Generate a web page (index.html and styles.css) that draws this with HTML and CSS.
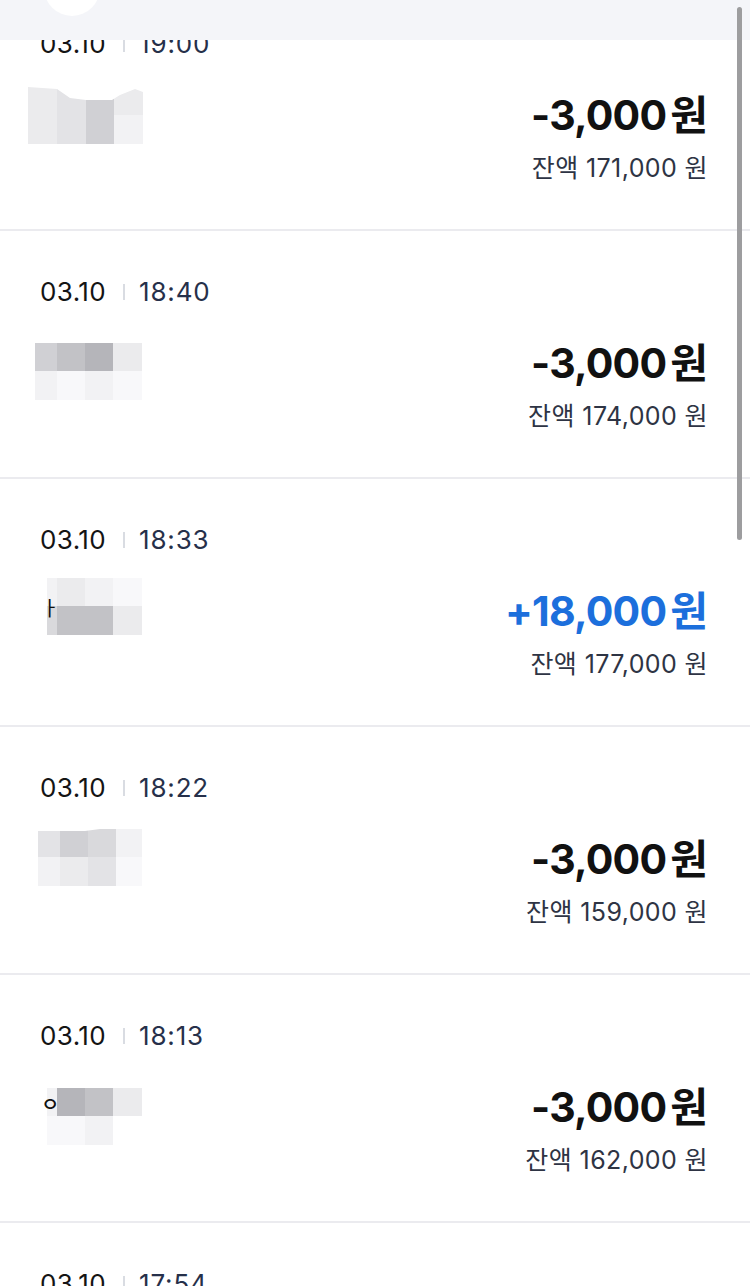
FILE: index.html
```html
<!DOCTYPE html>
<html lang="ko">
<head>
<meta charset="utf-8">
<title>거래내역</title>
<link rel="stylesheet" href="styles.css">
</head>
<body>
<div class="screen">
  <header class="topbar"><span class="avatar"></span></header>
  <div class="scrollbar"></div>
  <ul class="list">
    <li class="row">
      <div class="meta"><span class="date">03.10</span><span class="divider"></span><span class="time">19:00</span></div>
      <div class="body">
        <div class="name name-1">
          <div class="mosaic wide wave-1">
            <span class="g2"></span><span class="g3"></span><span class="g5"></span><span class="g2"></span>
            <span class="g2"></span><span class="g3"></span><span class="g5"></span><span class="g1"></span>
          </div>
        </div>
        <div class="amounts">
          <div class="amount">-3,000<span class="won">원</span></div>
          <div class="balance">잔액 171,000 원</div>
        </div>
      </div>
    </li>
    <li class="row">
      <div class="meta"><span class="date">03.10</span><span class="divider"></span><span class="time">18:40</span></div>
      <div class="body">
        <div class="name name-2">
          <div class="mosaic">
            <span class="g5"></span><span class="g6"></span><span class="g7"></span><span class="g2"></span>
            <span class="g1"></span><span class="g0"></span><span class="g1"></span><span class="g0"></span>
          </div>
        </div>
        <div class="amounts">
          <div class="amount">-3,000<span class="won">원</span></div>
          <div class="balance">잔액 174,000 원</div>
        </div>
      </div>
    </li>
    <li class="row">
      <div class="meta"><span class="date">03.10</span><span class="divider"></span><span class="time">18:33</span></div>
      <div class="body">
        <div class="name name-3">
          <span class="glyph glyph-b">ㅏ</span>
          <div class="mosaic narrow">
            <span class="g1"></span><span class="g2"></span><span class="g1"></span><span class="g0"></span>
            <span class="g4"></span><span class="g6"></span><span class="g6"></span><span class="g2"></span>
          </div>
        </div>
        <div class="amounts">
          <div class="amount plus">+18,000<span class="won">원</span></div>
          <div class="balance">잔액 177,000 원</div>
        </div>
      </div>
    </li>
    <li class="row">
      <div class="meta"><span class="date">03.10</span><span class="divider"></span><span class="time">18:22</span></div>
      <div class="body">
        <div class="name name-4">
          <div class="mosaic wave-4">
            <span class="g3"></span><span class="g5"></span><span class="g4"></span><span class="g1"></span>
            <span class="g1"></span><span class="g2"></span><span class="g3"></span><span class="g0"></span>
          </div>
        </div>
        <div class="amounts">
          <div class="amount">-3,000<span class="won">원</span></div>
          <div class="balance">잔액 159,000 원</div>
        </div>
      </div>
    </li>
    <li class="row">
      <div class="meta"><span class="date">03.10</span><span class="divider"></span><span class="time">18:13</span></div>
      <div class="body">
        <div class="name name-5">
          <span class="glyph glyph-o">ㅇ</span>
          <div class="mosaic narrow">
            <span class="g1"></span><span class="g7"></span><span class="g6"></span><span class="g2"></span>
            <span class="g0"></span><span class="g0"></span><span class="g1"></span><span class="blank"></span>
          </div>
        </div>
        <div class="amounts">
          <div class="amount">-3,000<span class="won">원</span></div>
          <div class="balance">잔액 162,000 원</div>
        </div>
      </div>
    </li>
    <li class="row">
      <div class="meta"><span class="date">03.10</span><span class="divider"></span><span class="time">17:54</span></div>
    </li>
  </ul>
</div>
</body>
</html>
```

FILE: styles.css
```css
html, body {
  margin: 0;
  padding: 0;
  background: #ffffff;
}

body {
  font-family: Inter, "Noto Sans CJK KR", "Noto Sans", sans-serif;
  color: #111111;
}

.screen {
  position: relative;
  width: 750px;
  height: 1286px;
  overflow: hidden;
  background: #ffffff;
}

.topbar {
  position: absolute;
  top: 0;
  left: 0;
  right: 0;
  height: 40px;
  background: #f4f5f9;
  overflow: hidden;
  z-index: 2;
}

.avatar {
  position: absolute;
  left: 44px;
  top: -40px;
  width: 56px;
  height: 56px;
  border-radius: 50%;
  background: #ffffff;
}

.scrollbar {
  position: absolute;
  top: 7px;
  right: 8px;
  width: 5px;
  height: 533px;
  border-radius: 3px;
  background: #9d9d9f;
  z-index: 3;
}

.list {
  list-style: none;
  margin: -17px 0 0 0;
  padding: 0;
}

.row {
  box-sizing: border-box;
  height: 248px;
  padding: 46px 42px 0 40px;
  border-bottom: 2px solid #ebebef;
}

.meta {
  display: flex;
  align-items: center;
  height: 30px;
  font-size: 26px;
  line-height: 30px;
}

.date {
  color: #141414;
  letter-spacing: 0.4px;
}

.divider {
  width: 2px;
  height: 16px;
  margin: 0 14px 0 17px;
  background: #d9dce2;
}

.time {
  color: #26304a;
  letter-spacing: 0.8px;
}

.body {
  display: flex;
  justify-content: space-between;
  align-items: flex-start;
  margin-top: 28px;
}

.name {
  position: relative;
  display: flex;
  align-items: center;
  margin-top: 8px;
}

.name-1 { margin-top: 0; margin-left: -12px; }
.name-2 { margin-left: -5px; }
.name-3 { margin-top: -5px; margin-left: 7px; }
.name-4 { margin-top: -2px; margin-left: -2px; }
.name-5 { margin-top: 9px; margin-left: 7px; }

.glyph {
  position: absolute;
  z-index: 1;
  font-family: "Noto Sans CJK KR", sans-serif;
  color: #111;
}

.glyph-b {
  left: -6px;
  top: 18px;
  font-size: 20px;
  line-height: 24px;
}

.glyph-o {
  left: -6px;
  top: 4px;
  font-size: 20px;
  line-height: 24px;
  font-weight: 500;
}

.mosaic {
  display: grid;
  grid-template-columns: 22px 28px 28px 29px;
  grid-template-rows: 28px 29px;
}

.mosaic.wide {
  grid-template-columns: 29px 29px 28px 29px;
}

.mosaic.narrow {
  grid-template-columns: 10px 28px 28px 29px;
}

.mosaic span {
  display: block;
}

.wave-1 {
  clip-path: polygon(0 0, 29px 2px, 42px 11px, 58px 13px, 84px 13px, 92px 8px, 107px 2px, 115px 5px, 115px 100%, 0 100%);
}

.wave-4 {
  clip-path: polygon(0 2px, 47px 2px, 62px 0, 104px 0, 104px 100%, 0 100%);
}

.g0 { background: #f8f8fa; }
.g1 { background: #f2f2f4; }
.g2 { background: #ebebed; }
.g3 { background: #e3e3e6; }
.g4 { background: #d9d9dc; }
.g5 { background: #d0d0d4; }
.g6 { background: #c2c2c6; }
.g7 { background: #b5b5ba; }
.blank { background: #ffffff; }

.amounts {
  display: flex;
  flex-direction: column;
  align-items: flex-end;
}

.amount {
  height: 50px;
  font-size: 41px;
  line-height: 50px;
  font-weight: 700;
  color: #111111;
  letter-spacing: -0.8px;
}

.amount .won {
  margin-left: 4px;
  font-family: "Noto Sans CJK KR", sans-serif;
  letter-spacing: 0;
}

.amount.plus {
  color: #1c6fdc;
}

.balance {
  margin-top: 15px;
  height: 32px;
  font-size: 25px;
  line-height: 32px;
  color: #2e3444;
  letter-spacing: 0.4px;
}
```
